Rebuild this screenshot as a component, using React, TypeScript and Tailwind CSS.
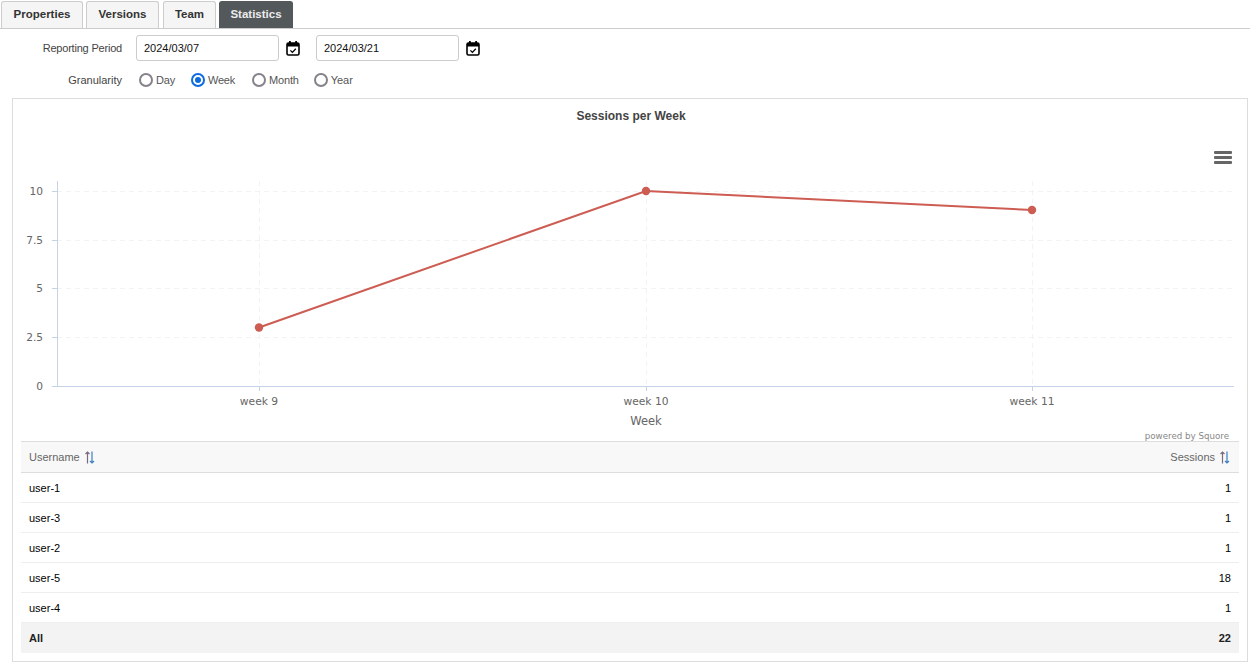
import React from 'react';

const tabs: [string, string][] = [
  ['Properties', 'w-[82px]'],
  ['Versions', 'w-[73px] ml-[3px]'],
  ['Team', 'w-[53px] ml-[4px]'],
  ['Statistics', 'w-[74px] ml-[3px]'],
];
const grans: [string, string][] = [
  ['Day', ''],
  ['Week', ''],
  ['Month', 'ml-[1px]'],
  ['Year', '-ml-[1px]'],
];
const rows = [
  ['user-1', '1'],
  ['user-3', '1'],
  ['user-2', '1'],
  ['user-5', '18'],
  ['user-4', '1'],
];

function CalendarIcon() {
  return (
    <svg width="14" height="16" viewBox="0 0 14 16" className="block">
      <rect x="1" y="3" width="12" height="12" rx="1.5" fill="none" stroke="#000" strokeWidth="1.6" />
      <rect x="1" y="3" width="12" height="3.5" fill="#000" />
      <rect x="3" y="1" width="1.8" height="3" fill="#000" />
      <rect x="9.2" y="1" width="1.8" height="3" fill="#000" />
      <path d="M4.4 10.4l2 2 3.4-3.6" fill="none" stroke="#000" strokeWidth="1.3" />
    </svg>
  );
}

function SortIcon() {
  return (
    <svg width="12" height="13" viewBox="0 0 12 13" className="block">
      <path d="M3.5 12.5V1M1.5 3L3.5 1 5.5 3" fill="none" stroke="#7a6a80" strokeWidth="1.2" />
      <path d="M8 0.5V12M6 10L8 12 10 10" fill="none" stroke="#3b7fc4" strokeWidth="1.2" />
    </svg>
  );
}

function Chart() {
  // coordinates are relative to the chart box (left 13, top 125 on the page)
  const ys: [string, number][] = [
    ['10', 66],
    ['7.5', 115],
    ['5', 163],
    ['2.5', 212],
    ['0', 261],
  ];
  const xs: [string, number][] = [
    ['week 9', 246],
    ['week 10', 633],
    ['week 11', 1019],
  ];
  const font = { fontFamily: '"DejaVu Sans", sans-serif' };
  return (
    <svg width="1234" height="316" viewBox="0 0 1234 316" className="block">
      {ys.slice(0, 4).map(([l, y]) => (
        <line key={l} x1="44" x2="1221" y1={y + 0.5} y2={y + 0.5} stroke="#f3f3f3" strokeDasharray="5 4" />
      ))}
      {xs.map(([l, x]) => (
        <line key={l} x1={x + 0.5} x2={x + 0.5} y1="56" y2="261" stroke="#f3f3f3" strokeDasharray="5 4" />
      ))}
      <line x1="44.5" x2="44.5" y1="56" y2="261" stroke="#c6d3e6" />
      <line x1="40" x2="1221" y1="261.5" y2="261.5" stroke="#c6d3e6" />
      {ys.map(([l, y]) => (
        <g key={l}>
          <line x1="39" x2="44" y1={y + 0.5} y2={y + 0.5} stroke="#c6d3e6" />
          <text x="30" y={y + 4} textAnchor="end" fontSize="10.6" fill="#666" style={font}>{l}</text>
        </g>
      ))}
      {xs.map(([l, x]) => (
        <g key={l}>
          <line x1={x + 0.5} x2={x + 0.5} y1="261" y2="266" stroke="#c6d3e6" />
          <text x={x} y="280" textAnchor="middle" fontSize="10.7" fill="#666" style={font}>{l}</text>
        </g>
      ))}
      <text x="633" y="300" textAnchor="middle" fontSize="11.5" fill="#666" style={font}>Week</text>
      <polyline points="246,202.5 633,66 1019,85" fill="none" stroke="#cd5c52" strokeWidth="2" />
      <circle cx="246" cy="202.5" r="4.2" fill="#cd5c52" />
      <circle cx="633" cy="66" r="4.2" fill="#cd5c52" />
      <circle cx="1019" cy="85" r="4.2" fill="#cd5c52" />
      <g fill="#666">
        <rect x="1201" y="26" width="18" height="3" rx="1" />
        <rect x="1201" y="31" width="18" height="3" rx="1" />
        <rect x="1201" y="36" width="18" height="3" rx="1" />
      </g>
      <text x="1216" y="314" textAnchor="end" fontSize="8.7" fill="#888" style={font}>powered by Squore</text>
    </svg>
  );
}

export default function App() {
  return (
    <div className="bg-white w-[1250px] h-[665px] overflow-hidden text-[11px] text-[#333]" style={{ fontFamily: '"Liberation Sans", Arial, sans-serif' }}>
      <div className="flex items-end h-[29px] pl-[1px] border-b border-[#ccc]">
        {tabs.map(([t, w]) => (
          <div
            key={t}
            className={
              t === 'Statistics'
                ? `${w} h-[27px] flex items-center justify-center rounded-t-[3px] font-bold text-[11.5px] text-[#ececec] bg-[#53585a] border border-[#53585a] border-b-0`
                : `${w} h-[27px] flex items-center justify-center rounded-t-[3px] font-bold text-[11.5px] text-[#333] bg-[#f5f5f5] border border-[#ccc] border-b-0`
            }
          >
            {t}
          </div>
        ))}
      </div>

      <div className="flex items-center h-[26px] mt-[6px]">
        <div className="w-[122px] text-right text-[#444] tracking-[-0.2px]">Reporting Period</div>
        <input readOnly value="2024/03/07" className="ml-[14px] w-[143px] h-[26px] px-[7px] rounded-[3px] border border-[#ccc] text-[11px] text-[#111] outline-none" />
        <div className="ml-[7px]"><CalendarIcon /></div>
        <input readOnly value="2024/03/21" className="ml-[16px] w-[143px] h-[26px] px-[7px] rounded-[3px] border border-[#ccc] text-[11px] text-[#111] outline-none" />
        <div className="ml-[7px]"><CalendarIcon /></div>
      </div>

      <div className="flex items-center h-[20px] mt-[9px]">
        <div className="w-[122px] text-right text-[#444]">Granularity</div>
        <div className="flex items-center ml-[17px] gap-[16px]">
          {grans.map(([g, extra]) => (
            <label key={g} className={`flex items-center gap-[3px] text-[#555] ${g === 'Year' ? '' : 'tracking-[-0.2px]'} ${extra}`}>
              {g === 'Week' ? (
                <span className="w-[14px] h-[14px] rounded-full border-2 border-[#0d6be0] flex items-center justify-center">
                  <span className="w-[6px] h-[6px] rounded-full bg-[#0d6be0]" />
                </span>
              ) : (
                <span className="w-[14px] h-[14px] rounded-full border-2 border-[#85828c]" />
              )}
              <span>{g}</span>
            </label>
          ))}
        </div>
      </div>

      <div className="mt-[8px] mx-[12px] w-[1236px] h-[564px] border border-[#ddd] relative">
        <div className="text-center text-[12px] font-bold text-[#444] pt-[10px] pl-[2px] h-[26px] leading-[14px]">Sessions per Week</div>
        <Chart />
        <div className="absolute left-[8px] top-[342px] w-[1218px]">
          <div className="flex items-center justify-between h-[32px] px-[8px] bg-[#f8f8f8] border-y border-[#ddd] text-[#666] text-[11px]">
            <span className="flex items-center gap-[4px]">Username <SortIcon /></span>
            <span className="flex items-center gap-[4px]">Sessions <SortIcon /></span>
          </div>
          {rows.map(([u, n]) => (
            <div key={u} className="flex items-center justify-between h-[30px] pt-[2px] px-[8px] border-b border-[#eee] text-[11px] text-[#000]">
              <span>{u}</span>
              <span>{n}</span>
            </div>
          ))}
          <div className="flex items-center justify-between h-[30px] px-[8px] bg-[#f3f3f3] text-[11px] font-bold text-[#222]">
            <span>All</span>
            <span>22</span>
          </div>
        </div>
      </div>
    </div>
  );
}
